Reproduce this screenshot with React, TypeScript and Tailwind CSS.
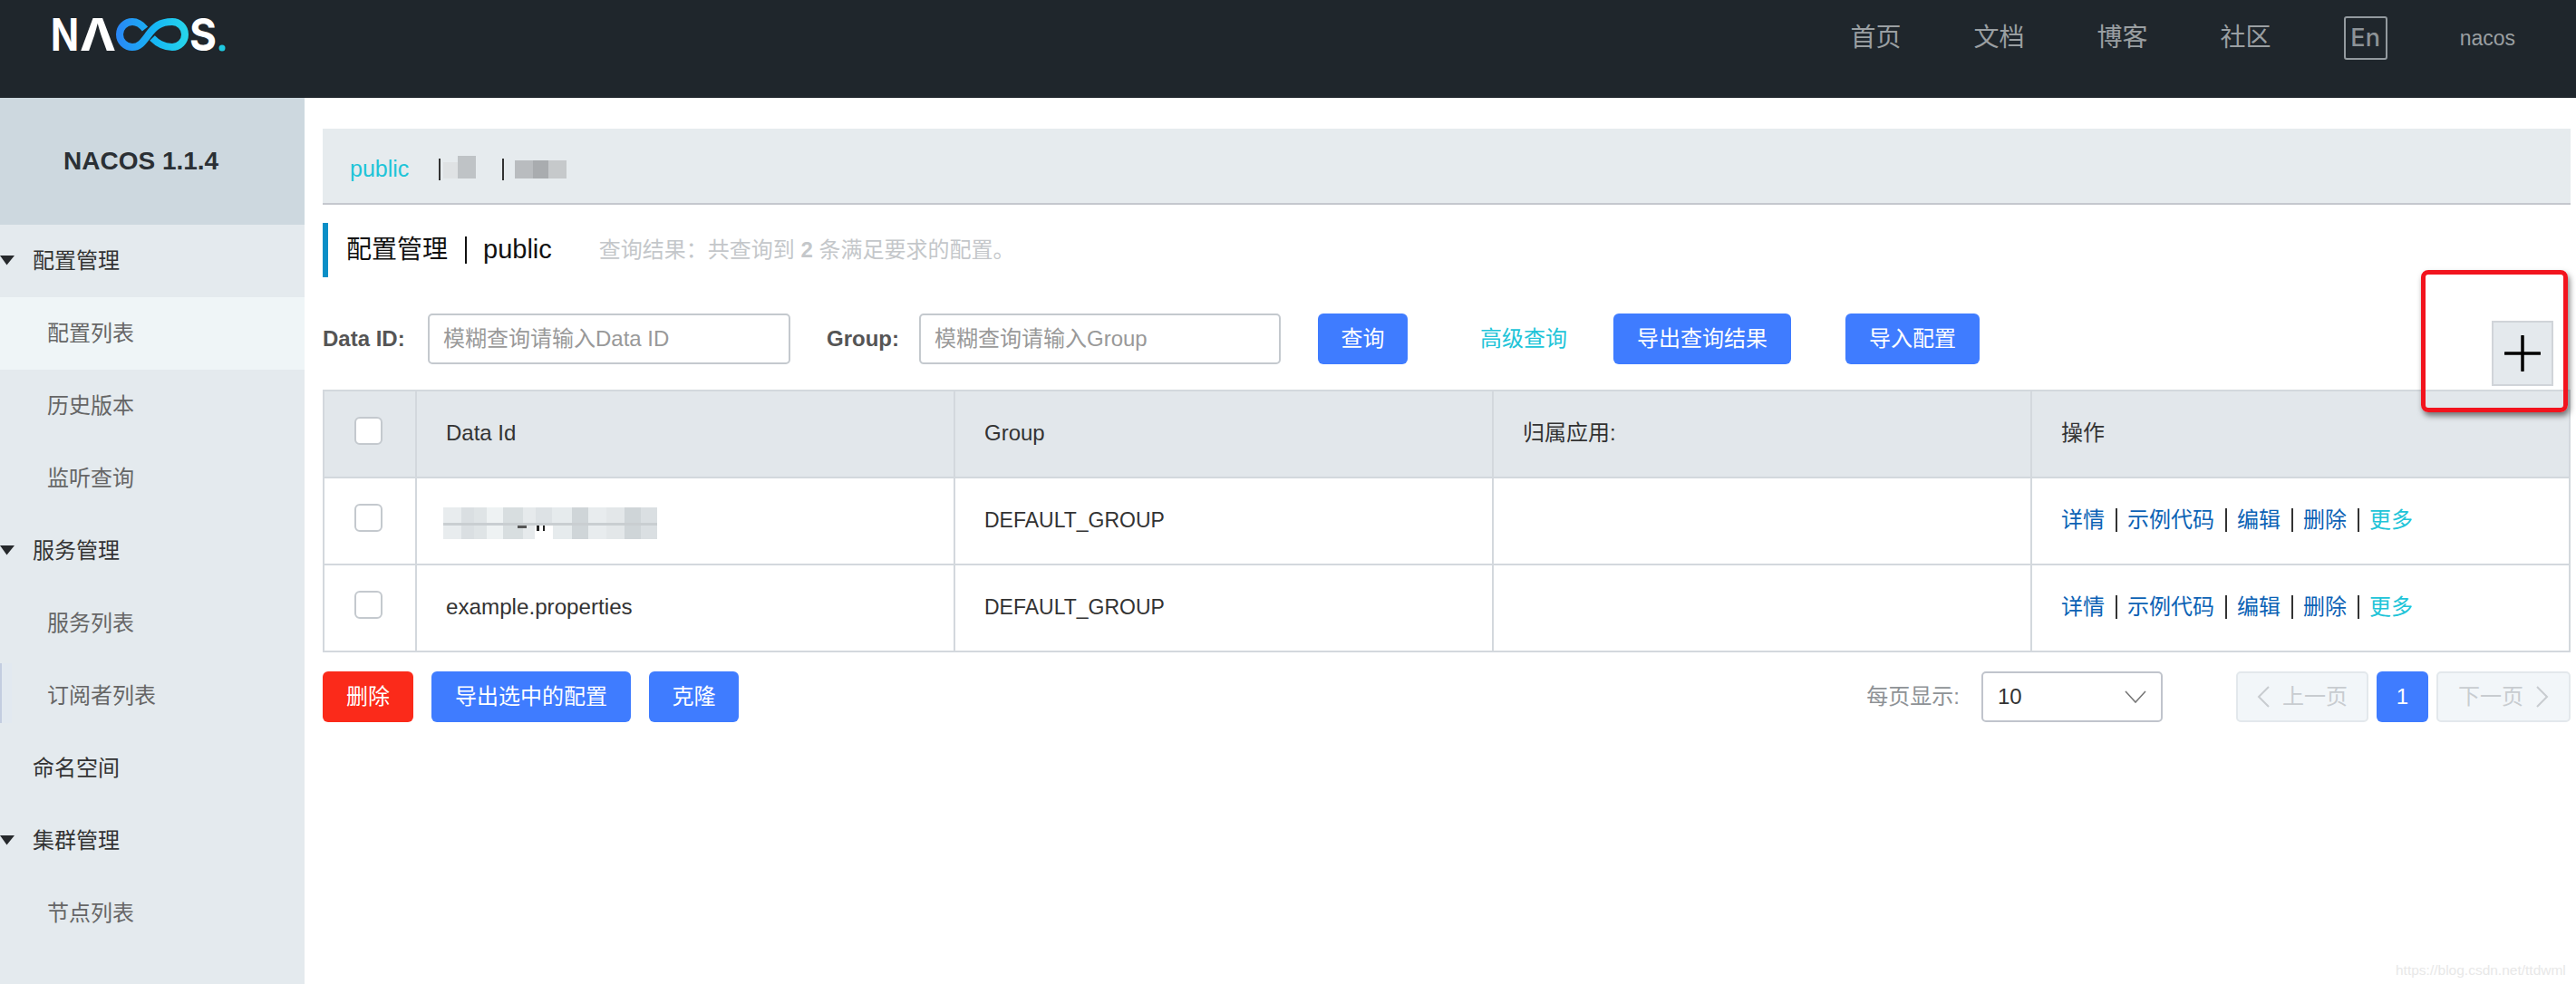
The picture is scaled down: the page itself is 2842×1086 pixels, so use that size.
import React from "react";

const Caret = () => (
  <svg className="absolute left-0 top-[34px]" width="16" height="11" viewBox="0 0 16 11">
    <path d="M0 0H16L7.5 10.5Z" fill="#26292c" />
  </svg>
);

const Logo = () => (
  <svg width="300" height="100" viewBox="0 0 300 100">
    <defs>
      <linearGradient id="inf" gradientUnits="userSpaceOnUse" x1="128" y1="0" x2="208" y2="0">
        <stop offset="0" stopColor="#2a86f6" />
        <stop offset="0.55" stopColor="#16b8f4" />
        <stop offset="1" stopColor="#27d6ea" />
      </linearGradient>
    </defs>
    <g fill="#ffffff" fontFamily="Inter, sans-serif" fontWeight="700" fontSize="50">
      <text x="56" y="56" textLength="31" lengthAdjust="spacingAndGlyphs">N</text>
      <text x="88" y="56" textLength="40" lengthAdjust="spacingAndGlyphs">Λ</text>
      <text x="209" y="56" textLength="30" lengthAdjust="spacingAndGlyphs">S</text>
    </g>
    <path
      d="M146 24A14 14 0 1 0 146 52C154 52 158 46 164 38C170 30 176 24 190 24A14 14 0 1 1 190 52C179 52 173 47 168 42"
      fill="none"
      stroke="url(#inf)"
      strokeWidth="8"
    />
    <path d="M146 24C152 24 156 27 160 32" fill="none" stroke="url(#inf)" strokeWidth="8" />
    <circle cx="245" cy="53" r="3.5" fill="#1fc8e0" />
  </svg>
);

const menu: { label: string; top?: boolean; caret?: boolean; cls?: string; mark?: boolean }[] = [
  { label: "配置管理", top: true, caret: true },
  { label: "配置列表", cls: "bg-[#eff5f7]" },
  { label: "历史版本" },
  { label: "监听查询" },
  { label: "服务管理", top: true, caret: true },
  { label: "服务列表" },
  { label: "订阅者列表", mark: true },
  { label: "命名空间", top: true },
  { label: "集群管理", top: true, caret: true },
  { label: "节点列表" },
];

const Sidebar = () => (
  <aside className="w-[336px] shrink-0 bg-[#e4eaee]">
    <div className="flex h-[140px] items-center bg-[#cdd8df] pl-[70px] text-[28px] font-bold text-[#2b3035]">
      NACOS 1.1.4
    </div>
    {menu.map((m) => (
      <div
        key={m.label}
        className={`relative flex h-[80px] items-center text-[24px] ${m.top ? "pl-[36px] text-[#333]" : "pl-[52px] text-[#666]"} ${m.cls ?? ""}`}
      >
        {m.caret && <Caret />}
        {m.mark && (
          <span className="absolute left-0 top-[4px] h-[66px] w-[13px] border-l-2 border-[#c3cde0] bg-[#e2e9f0]" />
        )}
        <span className="relative">{m.label}</span>
      </div>
    ))}
  </aside>
);

const Btn = ({ w, children, cls }: { w: string; children: React.ReactNode; cls?: string }) => (
  <button className={`flex h-[56px] items-center justify-center rounded-[6px] text-[24px] text-white ${w} ${cls ?? "bg-[#3f7cff]"}`}>
    {children}
  </button>
);

const Check = () => (
  <span className="mb-[6px] ml-[1px] block h-[31px] w-[31px] rounded-[6px] border-2 border-[#c4c9ce] bg-white" />
);

const Sep = () => <span className="mx-[11.5px] inline-block h-[26px] w-[2px] bg-[#333] align-middle" />;

const Actions = () => (
  <div className="flex items-center text-[#0b62b5]">
    <span>详情</span>
    <Sep />
    <span>示例代码</span>
    <Sep />
    <span>编辑</span>
    <Sep />
    <span>删除</span>
    <Sep />
    <span className="text-[#20c4d8]">更多</span>
  </div>
);

const mosaic = [
  "w-[20px] bg-[#e8ecee]",
  "w-[14px] bg-[#dadfe2]",
  "w-[14px] bg-[#dfe4e6]",
  "w-[18px] bg-[#eef2f3]",
  "w-[22px] bg-[#d8dee0]",
  "w-[14px] bg-[#e6eaec]",
  "w-[18px] bg-[#dde2e5]",
  "w-[22px] bg-[#e6ebed]",
  "w-[18px] bg-[#cfd5d8]",
  "w-[20px] bg-[#e8ecee]",
  "w-[20px] bg-[#e3e7e9]",
  "w-[18px] bg-[#cfd5d8]",
  "w-[18px] bg-[#dadfe2]",
];

const Blur = () => (
  <div className="relative ml-[-3px] mt-[6px] flex h-[35px] w-[236px]">
    {mosaic.map((c, i) => (
      <span key={i} className={`block h-full ${c}`} />
    ))}
    <span className="absolute left-[101px] top-[20px] h-[15px] w-[20px] bg-white" />
    <span className="absolute left-0 top-[17px] h-[3px] w-full bg-[#c9ced1]" />
    <span className="absolute left-[82px] top-[20px] h-[3px] w-[10px] bg-[#555]" />
    <span className="absolute left-[103px] top-[20px] h-[6px] w-[3px] bg-[#222]" />
    <span className="absolute left-[110px] top-[20px] h-[6px] w-[2px] bg-[#222]" />
  </div>
);

const Th = ({ children, cls }: { children?: React.ReactNode; cls?: string }) => (
  <th className={`h-[96px] border-2 border-[#d3d8dd] bg-[#e2e7eb] px-[32px] pb-[2px] text-left font-normal text-[#333] ${cls ?? ""}`}>{children}</th>
);
const Td = ({ children, cls }: { children?: React.ReactNode; cls?: string }) => (
  <td className={`h-[96px] border-2 border-[#d3d8dd] px-[32px] pb-[2px] text-[#333] ${cls ?? ""}`}>{children}</td>
);

const rows = [{ id: <Blur /> }, { id: <span className="text-[24.2px]">example.properties</span> }];

const Main = () => (
  <main className="relative flex-1 pl-[20px] pr-[8px] pt-[34px]">
    <div className="flex h-[84px] items-center border-b-2 border-[#c5c8ce] bg-[#e6ebee] pl-[30px] pt-[7px]">
      <span className="w-[98px] text-[25px] text-[#20c4d8]">public</span>
      <span className="h-[24px] w-[2px] bg-[#333]" />
      <span className="ml-[3px] mb-[4px] flex h-[25px] w-[36px] items-end">
        <span className="h-[18px] w-[16px] bg-[#dfe2e4]" />
        <span className="h-[25px] w-[20px] bg-[#bfc3c6]" />
      </span>
      <span className="ml-[29px] h-[24px] w-[2px] bg-[#333]" />
      <span className="ml-[12px] flex h-[20px] w-[57px]">
        <span className="w-[20px] bg-[#b9bcbf]" />
        <span className="w-[17px] bg-[#a9acaf]" />
        <span className="w-[20px] bg-[#c6c9cb]" />
      </span>
    </div>
    <div className="mt-[20px] flex h-[60px] items-center border-l-[6px] border-[#0a8fc7] pl-[20px] text-[28px] text-[#111]">
      <span>配置管理</span>
      <span className="ml-[19px] h-[30px] w-[2px] bg-[#111]" />
      <span className="ml-[18px] text-[29px]">public</span>
      <span className="ml-[52px] text-[24px] text-[#c4c7ca]">
        查询结果：共查询到 <b>2</b> 条满足要求的配置。
      </span>
    </div>
    <div className="mt-[40px] flex h-[84px] items-start text-[24px]">
      <label className="flex h-[56px] w-[92px] items-center font-bold text-[#555]">Data ID:</label>
      <div className="ml-[24px] flex h-[56px] w-[400px] items-center rounded-[5px] border-2 border-[#c4c9ce] pl-[15px] text-[#999]">
        模糊查询请输入Data ID
      </div>
      <label className="ml-[40px] flex h-[56px] w-[77px] items-center whitespace-nowrap font-bold text-[#555]">Group:</label>
      <div className="ml-[25px] flex h-[56px] w-[399px] items-center rounded-[5px] border-2 border-[#c4c9ce] pl-[15px] text-[#999]">
        模糊查询请输入Group
      </div>
      <Btn w="ml-[41px] w-[99px]">查询</Btn>
      <span className="ml-[80px] flex h-[56px] w-[96px] items-center text-[#20c4d8]">高级查询</span>
      <Btn w="ml-[51px] w-[196px]">导出查询结果</Btn>
      <Btn w="ml-[60px] w-[148px]">导入配置</Btn>
      <button className="ml-auto mr-[19px] mt-[8px] flex h-[72px] w-[68px] items-center justify-center border-2 border-[#d0d4d9] bg-[#e4e9ed]">
        <svg width="40" height="40" viewBox="0 0 40 40">
          <path d="M20 1V39M1 20H39" stroke="#000" strokeWidth="3.5" strokeLinecap="round" />
        </svg>
      </button>
    </div>
    <table className="w-[2478px] table-fixed border-collapse text-[24px]">
      <colgroup>
        <col className="w-[102px]" />
        <col className="w-[594px]" />
        <col className="w-[594px]" />
        <col className="w-[594px]" />
        <col className="w-[594px]" />
      </colgroup>
      <thead>
        <tr>
          <Th><Check /></Th>
          <Th>Data Id</Th>
          <Th>Group</Th>
          <Th>归属应用:</Th>
          <Th>操作</Th>
        </tr>
      </thead>
      <tbody>
        {rows.map((r, i) => (
          <tr key={i}>
            <Td><Check /></Td>
            <Td>{r.id}</Td>
            <Td cls="text-[23px]">DEFAULT_GROUP</Td>
            <Td />
            <Td><Actions /></Td>
          </tr>
        ))}
      </tbody>
    </table>
    <div className="mt-[21px] flex h-[56px] items-center text-[24px]">
      <Btn w="w-[100px]" cls="bg-[#fb2a1a]">删除</Btn>
      <Btn w="ml-[20px] w-[220px]">导出选中的配置</Btn>
      <Btn w="ml-[20px] w-[99px]">克隆</Btn>
      <span className="ml-auto text-[#8e9296]">每页显示:</span>
      <div className="ml-[24px] flex h-[56px] w-[200px] items-center justify-between rounded-[5px] border-2 border-[#c0c4cc] pl-[16px] pr-[16px] text-[#333]">
        <span>10</span>
        <svg width="24" height="14" viewBox="0 0 24 14">
          <path d="M1 1L12 13L23 1" fill="none" stroke="#777" strokeWidth="1.6" />
        </svg>
      </div>
      <div className="ml-[81px] flex h-[56px] w-[146px] items-center justify-center gap-[14px] rounded-[5px] border-2 border-[#e3e8ec] bg-[#f2f6f9] text-[#c8ccd0]">
        <svg width="14" height="24" viewBox="0 0 14 24">
          <path d="M13 1L2 12L13 23" fill="none" stroke="#c8ccd0" strokeWidth="2" />
        </svg>
        <span>上一页</span>
      </div>
      <Btn w="ml-[9px] w-[57px]">1</Btn>
      <div className="ml-[9px] flex h-[56px] w-[148px] items-center justify-center gap-[14px] rounded-[5px] border-2 border-[#e3e8ec] bg-[#f2f6f9] text-[#c8ccd0]">
        <span>下一页</span>
        <svg width="14" height="24" viewBox="0 0 14 24">
          <path d="M1 1L12 12L1 23" fill="none" stroke="#c8ccd0" strokeWidth="2" />
        </svg>
      </div>
    </div>
  </main>
);

export default function App() {
  return (
    <div className="relative flex h-[1086px] w-[2842px] flex-col overflow-hidden bg-white font-['Liberation_Sans','Noto_Sans_CJK_SC',sans-serif]">
      <header className="flex h-[108px] shrink-0 items-start justify-between overflow-hidden bg-[#1f262c]">
        <Logo />
        <nav className="flex h-[84px] items-center pr-[67px] text-[#9a9fa2]">
          <span className="text-[28px]">首页</span>
          <span className="ml-[80px] text-[28px]">文档</span>
          <span className="ml-[80px] text-[28px]">博客</span>
          <span className="ml-[80px] text-[28px]">社区</span>
          <span className="ml-[80px] flex h-[48px] w-[48px] items-center justify-center rounded-[3px] border-2 border-[#939a9f] font-['Inter',sans-serif] text-[27px] font-medium text-[#8d9397]">En</span>
          <span className="ml-[80px] text-[23px]">nacos</span>
        </nav>
      </header>
      <div className="flex flex-1">
        <Sidebar />
        <Main />
      </div>
      <div className="absolute left-[2671px] top-[298px] h-[157px] w-[162px] rounded-[8px] border-[5px] border-[#f2141e] shadow-[2px_4px_6px_rgba(0,0,0,0.5)]" />
      <span className="absolute left-[2643px] top-[1059px] text-[15.5px] text-[#e8e8e8]">https://blog.csdn.net/ttdwml</span>
    </div>
  );
}
